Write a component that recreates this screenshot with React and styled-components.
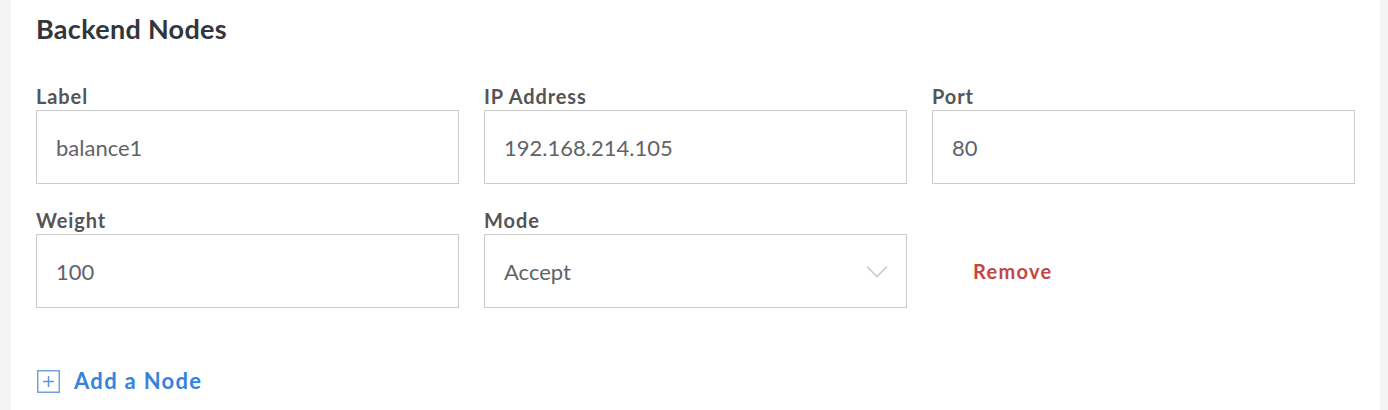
import React from 'react';
import styled, { createGlobalStyle } from 'styled-components';

const GlobalStyle = createGlobalStyle`
    body {
        margin:0;
        background:#f4f4f4;
        font-family: Lato, "Noto Sans", sans-serif;
    }
`

const nodes = [
    { label: 'balance1', ip: '192.168.214.105', port: '80', weight: '100', mode: 'Accept' },
];

const Field = ({ title, value, select }) => (
    <FieldWrapper>
        <FieldLabel>{title}</FieldLabel>
        <InputBox>
            <InputValue>{value}</InputValue>
            {select && (
                <svg width="22" height="13" viewBox="0 0 22 13">
                    <path d="M1 1.5 L11 11.5 L21 1.5" fill="none" stroke="#c9cacb" strokeWidth="1.6" />
                </svg>
            )}
        </InputBox>
    </FieldWrapper>
)

const App = () => {
    return(
        <>
            <GlobalStyle />
            <Page>
                <Panel>
                    <PanelTitle>Backend Nodes</PanelTitle>
                    {nodes.map((node, i) => (
                        <NodeGrid key={i}>
                            <Field title='Label' value={node.label} />
                            <Field title='IP Address' value={node.ip} />
                            <Field title='Port' value={node.port} />
                            <Field title='Weight' value={node.weight} />
                            <Field title='Mode' value={node.mode} select />
                            <RemoveCell>
                                <RemoveButton>Remove</RemoveButton>
                            </RemoveCell>
                        </NodeGrid>
                    ))}
                    <AddButton>
                        <svg width="23" height="23" viewBox="0 0 23 23">
                            <rect x="0.75" y="0.75" width="21.5" height="21.5" fill="none" stroke="#6fa3e4" strokeWidth="1.5" />
                            <path d="M11.5 6 V17 M6 11.5 H17" stroke="#5b95df" strokeWidth="1.5" />
                        </svg>
                        Add a Node
                    </AddButton>
                </Panel>
            </Page>
        </>
    )
}

export default App;


const Page = styled.div`
    width:100%;
    height:410px;
    padding:0 8px 0 11px;
    box-sizing:border-box;
    overflow:hidden;
`

const Panel = styled.div`
    background:#fff;
    height:100%;
    padding:13px 25px 0 25px;
    box-sizing:border-box;
`

const PanelTitle = styled.h2`
    margin:0;
    font-size:27px;
    font-weight:700;
    letter-spacing:0.3px;
    color:#32363c;
    line-height:32px;
`

const NodeGrid = styled.div`
    display:grid;
    grid-template-columns:repeat(3, 423px);
    column-gap:25px;
    row-gap:25px;
    margin-top:40px;
`

const FieldWrapper = styled.div`
    display:flex;
    flex-direction:column;
`

const FieldLabel = styled.label`
    font-size:20px;
    font-weight:700;
    letter-spacing:0.9px;
    color:#555;
    line-height:22px;
    margin-bottom:3px;
`

const InputBox = styled.div`
    height:74px;
    border:1.5px solid #ccc;
    box-sizing:border-box;
    display:flex;
    align-items:center;
    justify-content:space-between;
    padding:0 18px 0 19px;
`

const InputValue = styled.span`
    font-size:22px;
    color:#606469;
`

const RemoveCell = styled.div`
    display:flex;
    align-items:flex-end;
    height:100%;
`

const RemoveButton = styled.button`
    background:none;
    border:none;
    font-family:inherit;
    font-size:20px;
    font-weight:700;
    letter-spacing:1.3px;
    color:#c44742;
    height:74px;
    padding:0 0 0 41px;
    cursor:pointer;
`

const AddButton = styled.button`
    display:flex;
    align-items:center;
    gap:14px;
    margin-top:60px;
    margin-left:1px;
    padding:0;
    background:none;
    border:none;
    font-family:inherit;
    font-size:22px;
    line-height:26px;
    font-weight:700;
    letter-spacing:1.3px;
    color:#3683dc;
    cursor:pointer;
`
